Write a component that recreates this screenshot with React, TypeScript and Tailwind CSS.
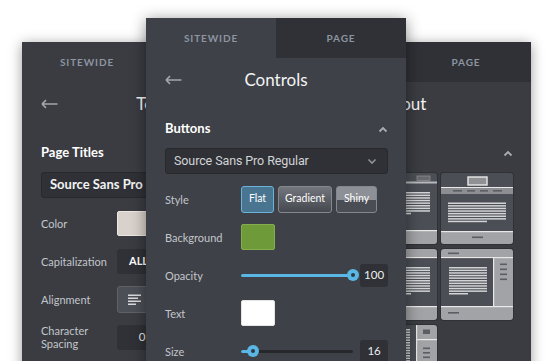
import React from "react";

const LIGHT = "#a2a3a6";
const DARK = "#4b4e54";
const WL = "#e8e8e8";
const TL = "#d3d4d6";
const DASH = "#5a5d62";

function Tabs({ left, right, active }: { left: string; right: string; active: "left" | "right" }) {
  return (
    <div className="flex h-[40px]">
      <div
        className={`w-1/2 flex items-center justify-center text-[10px] font-bold tracking-[0.09em] text-[#8d95a1] ${
          active === "left" ? "" : "bg-[#2f3136]"
        }`}
      >
        {left}
      </div>
      <div
        className={`w-1/2 flex items-center justify-center text-[10px] font-bold tracking-[0.09em] text-[#8d95a1] ${
          active === "right" ? "" : "bg-[#2f3136]"
        }`}
      >
        {right}
      </div>
    </div>
  );
}

function BackArrow() {
  return (
    <svg width="17" height="10" viewBox="0 0 17 10" className="absolute left-[19px] top-[17px]">
      <path d="M1 5H16.5M1 5L5 1.2M1 5L5 8.8" stroke="#a3a7ad" strokeWidth="1.6" fill="none" />
    </svg>
  );
}

function TitleRow({ title }: { title: string }) {
  return (
    <div className="h-[44px] relative flex items-center justify-center">
      <BackArrow />
      <span className="text-[17px] text-[#f3f4f5]">{title}</span>
    </div>
  );
}

function ChevronUp() {
  return (
    <svg width="10" height="7" viewBox="0 0 10 7">
      <path d="M1.5 5.5L5 2L8.5 5.5" stroke="#a9adb3" strokeWidth="1.8" fill="none" />
    </svg>
  );
}

function ChevronDown() {
  return (
    <svg width="10" height="7" viewBox="0 0 10 7">
      <path d="M1.5 1.5L5 5L8.5 1.5" stroke="#8e9297" strokeWidth="1.6" fill="none" />
    </svg>
  );
}

function Row({ label, children }: { label: React.ReactNode; children?: React.ReactNode }) {
  return (
    <div className="h-[38px] flex items-center">
      <div className="w-[76px] shrink-0 text-[11px] leading-[13px] text-[#c3c6cb]">{label}</div>
      {children}
    </div>
  );
}

function Slider({ value }: { value: number }) {
  const pos = (value / 100) * 108;
  return (
    <div className="relative w-[113px] h-[12px]">
      <div className="absolute left-0 right-0 top-[4.5px] h-[3px] rounded-full bg-[#26282c]" />
      <div className="absolute left-0 top-[4.5px] h-[3px] rounded-full bg-[#5ab6e4]" style={{ width: pos + 3 }} />
      <div
        className="absolute top-[0px] w-[12px] h-[12px] rounded-full bg-[#5ab6e4] flex items-center justify-center"
        style={{ left: pos - 2 }}
      >
        <div className="w-[4px] h-[4px] rounded-full bg-[#2c3a44]" />
      </div>
    </div>
  );
}

function NumBox({ v }: { v: string }) {
  return (
    <div className="ml-[7px] w-[28px] h-[23px] rounded-[3px] bg-[#2f3136] flex items-center justify-center text-[11.5px] text-[#eceef0]">
      {v}
    </div>
  );
}

/* ---------- layout thumbnails ---------- */
function ThumbFrame({ children }: { children: React.ReactNode }) {
  return (
    <div className="w-[72px] h-[71px] rounded-[3px] overflow-hidden shadow-[0_0_0_1px_#2f3136]">
      <svg width="72" height="71" viewBox="0 0 72 71">
        {children}
      </svg>
    </div>
  );
}

function Lines({ x, y, w, n, last }: { x: number; y: number; w: number; n: number; last: number }) {
  const out = [];
  for (let i = 0; i < n; i++) out.push(<rect key={i} x={x} y={y + i * 2.6} width={w} height={1.5} fill={TL} />);
  out.push(<rect key="l" x={x} y={y + n * 2.6} width={last} height={1.5} fill={TL} />);
  return <>{out}</>;
}

function ThumbA() {
  return (
    <ThumbFrame>
      <rect width="72" height="71" fill={DARK} />
      <rect x="27" y="4" width="19" height="8" fill="#8f9195" stroke={WL} strokeWidth="1.4" />
      <rect x="0" y="14" width="72" height="7" fill="#8c8e92" />
      <rect x="0" y="14" width="72" height="1" fill={WL} />
      <rect x="12" y="17" width="9" height="1.6" fill={DASH} />
      <rect x="26" y="17" width="8" height="1.6" fill={DASH} />
      <rect x="39" y="17" width="8" height="1.6" fill={DASH} />
      <rect x="52" y="17" width="9" height="1.6" fill={DASH} />
      <Lines x={7} y={29.5} w={58} n={7} last={39} />
      <rect x="0" y="58" width="72" height="13" fill={LIGHT} />
      <rect x="0" y="58" width="72" height="1.2" fill={WL} />
      <rect x="31" y="63.5" width="11" height="1.6" fill={DASH} />
    </ThumbFrame>
  );
}

function ThumbB() {
  return (
    <ThumbFrame>
      <rect width="72" height="71" fill={LIGHT} />
      <rect x="7" y="3.5" width="11" height="1.6" fill={DASH} />
      <rect x="0" y="8" width="72" height="1.2" fill={WL} />
      <rect x="0" y="9.2" width="52" height="47.8" fill={DARK} />
      <rect x="52" y="9.2" width="1.2" height="47.8" fill={WL} />
      <rect x="59" y="14.5" width="7" height="1.6" fill={DASH} />
      <rect x="59" y="19.5" width="7" height="1.6" fill={DASH} />
      <rect x="59" y="24.5" width="7" height="1.6" fill={DASH} />
      <rect x="59" y="29.5" width="7" height="1.6" fill={DASH} />
      <Lines x={8} y={18} w={38} n={10} last={19} />
      <rect x="0" y="57" width="72" height="1.2" fill={WL} />
      <rect x="7" y="63" width="11" height="1.6" fill={DASH} />
    </ThumbFrame>
  );
}

function ThumbC() {
  return (
    <ThumbFrame>
      <rect width="72" height="71" fill={DARK} />
      <rect x="52" y="3" width="13" height="4.5" fill="#66686d" stroke="#8a8c90" strokeWidth="0.8" />
      <rect x="0" y="8.5" width="72" height="2" fill="#b8b9bb" />
      <Lines x={10} y={19} w={55} n={8} last={36} />
      <rect x="0" y="57" width="72" height="14" fill={LIGHT} />
      <rect x="0" y="57" width="72" height="1.2" fill={WL} />
    </ThumbFrame>
  );
}

function ThumbD() {
  return (
    <ThumbFrame>
      <rect width="72" height="71" fill={LIGHT} />
      <rect x="7" y="3.5" width="11" height="1.6" fill={DASH} />
      <rect x="0" y="8" width="72" height="1.2" fill={WL} />
      <rect x="0" y="9.2" width="72" height="47.8" fill={DARK} />
      <Lines x={8} y={18} w={57} n={10} last={38} />
      <rect x="0" y="57" width="72" height="1.2" fill={WL} />
      <rect x="7" y="63" width="11" height="1.6" fill={DASH} />
    </ThumbFrame>
  );
}

function ThumbE() {
  return (
    <ThumbFrame>
      <rect width="72" height="71" fill={LIGHT} />
      <rect x="0" y="0" width="51" height="71" fill={DARK} />
      <rect x="51" y="0" width="1.2" height="71" fill={WL} />
      <rect x="58" y="4.5" width="7" height="4.5" fill={DASH} />
      <rect x="52" y="14" width="20" height="1.2" fill={WL} />
      <rect x="58" y="22.5" width="7" height="1.6" fill={DASH} />
      <rect x="58" y="27" width="7" height="1.6" fill={DASH} />
      <rect x="58" y="31.5" width="7" height="1.6" fill={DASH} />
      <rect x="58" y="36" width="7" height="1.6" fill={DASH} />
      <Lines x={5} y={4} w={40} n={22} last={20} />
    </ThumbFrame>
  );
}

function AlignLeftIcon() {
  return (
    <svg width="13" height="11" viewBox="0 0 13 11">
      <rect x="0" y="0.5" width="13" height="1.5" fill="#d8dadd" />
      <rect x="0" y="3.5" width="10" height="1.5" fill="#d8dadd" />
      <rect x="0" y="6.5" width="13" height="1.5" fill="#d8dadd" />
      <rect x="0" y="9.5" width="8" height="1.5" fill="#d8dadd" />
    </svg>
  );
}

export default function App() {
  return (
    <div className="relative w-[553px] h-[361px] overflow-hidden bg-white font-[family-name:Lato,'Open_Sans',sans-serif]">
      {/* Left panel: Sitewide / Text */}
      <div className="absolute left-[22px] top-[42px] w-[260px] h-[360px] bg-[#3a3c42] shadow-[0_2px_12px_rgba(0,0,0,0.4)]">
        <Tabs left="SITEWIDE" right="PAGE" active="left" />
        <TitleRow title="Text" />
        <div className="pl-[19px] pr-[18px]">
          <div className="mt-[19px] h-[16px] flex items-center justify-between">
            <span className="text-[13px] font-bold text-white">Page Titles</span>
            <ChevronUp />
          </div>
          <div className="mt-[11px] h-[26px] rounded-[3px] bg-[#2f3136] border border-[#27292d] flex items-center justify-between pl-[8px] pr-[10px]">
            <span className="text-[13px] font-bold text-[#f2f3f4]">Source Sans Pro</span>
            <ChevronDown />
          </div>
          <div className="mt-[6px]">
            <Row label="Color">
              <div className="w-[34px] h-[25px] rounded-[2px] bg-[#d9d1cb] border border-[#ece7e3]" />
            </Row>
            <Row label="Capitalization">
              <div className="w-[110px] h-[25px] rounded-[3px] bg-[#2f3136] flex items-center pl-[12px] text-[11px] font-bold text-white">
                ALL CAPS
              </div>
            </Row>
            <Row label="Alignment">
              <div className="flex gap-[3px]">
                <div className="w-[34px] h-[27px] rounded-[3px] bg-[#4c4f56] border border-[#5e6168] flex items-center justify-center">
                  <AlignLeftIcon />
                </div>
                <div className="w-[34px] h-[27px] rounded-[3px] bg-[#2f3136]" />
              </div>
            </Row>
            <Row
              label={
                <>
                  Character
                  <br />
                  Spacing
                </>
              }
            >
              <div className="w-[50px] h-[25px] rounded-[3px] bg-[#2f3136] flex items-center justify-center text-[11.5px] text-[#eceef0]">
                0
              </div>
            </Row>
          </div>
        </div>
      </div>

      {/* Right panel: Page / Layout */}
      <div className="absolute left-[271px] top-[42px] w-[260px] h-[360px] bg-[#3a3c42] shadow-[0_2px_12px_rgba(0,0,0,0.4)]">
        <div className="flex h-[40px] bg-[#2f3136]">
          <div className="w-1/2 flex items-center justify-center text-[10px] font-bold tracking-[0.09em] text-[#8d95a1]">
            SITEWIDE
          </div>
          <div className="w-1/2 flex items-center justify-center text-[10px] font-bold tracking-[0.09em] text-[#8d95a1]">
            PAGE
          </div>
        </div>
        <TitleRow title="Layout" />
        <div className="pl-[18px] pr-[18px]">
          <div className="mt-[19px] h-[16px] flex items-center justify-end">
            <ChevronUp />
          </div>
          <div className="mt-[12px] grid grid-cols-[72px_72px_72px] gap-x-[4px] gap-y-[5px]">
            <ThumbD />
            <ThumbC />
            <ThumbA />
            <ThumbB />
            <ThumbD />
            <ThumbB />
            <ThumbE />
            <ThumbE />
          </div>
        </div>
      </div>

      {/* Center panel: Controls */}
      <div className="absolute left-[146px] top-[18px] w-[260px] h-[360px] bg-[#3e4148] shadow-[0_2px_14px_rgba(0,0,0,0.45)]">
        <Tabs left="SITEWIDE" right="PAGE" active="left" />
        <TitleRow title="Controls" />
        <div className="pl-[19px] pr-[18px]">
          <div className="mt-[19px] h-[16px] flex items-center justify-between">
            <span className="text-[13px] font-bold text-white">Buttons</span>
            <ChevronUp />
          </div>
          <div className="mt-[11px] h-[26px] rounded-[3px] bg-[#2f3136] border border-[#27292d] flex items-center justify-between pl-[8px] pr-[10px]">
            <span className="font-[family-name:Roboto,sans-serif] text-[12.5px] tracking-[-0.1px] text-[#d2d4d7]">
              Source Sans Pro Regular
            </span>
            <ChevronDown />
          </div>
          <div className="mt-[6px]">
            <Row label="Style">
              <div className="flex gap-[4px]">
                <div className="w-[33px] h-[27px] rounded-[3px] bg-[#4a7591] border border-[#6cb3dc] flex items-center justify-center text-[10.5px] text-white">
                  Flat
                </div>
                <div className="w-[54px] h-[27px] rounded-[3px] bg-gradient-to-b from-[#73767c] to-[#45484e] border border-[#85888e] flex items-center justify-center text-[10.5px] text-white">
                  Gradient
                </div>
                <div className="w-[41px] h-[27px] rounded-[3px] bg-[linear-gradient(#8d9096_0%,#8d9096_50%,#4a4d53_50%,#4a4d53_100%)] border border-[#85888e] flex items-center justify-center text-[10.5px] text-white">
                  Shiny
                </div>
              </div>
            </Row>
            <Row label="Background">
              <div className="w-[34px] h-[26px] rounded-[2px] bg-[#6f9a3a] border border-[#85ad4e]" />
            </Row>
            <Row label="Opacity">
              <Slider value={100} />
              <NumBox v="100" />
            </Row>
            <Row label="Text">
              <div className="w-[34px] h-[26px] rounded-[2px] bg-white border border-[#e5e5e5]" />
            </Row>
            <Row label="Size">
              <Slider value={7} />
              <NumBox v="16" />
            </Row>
          </div>
        </div>
      </div>
    </div>
  );
}
